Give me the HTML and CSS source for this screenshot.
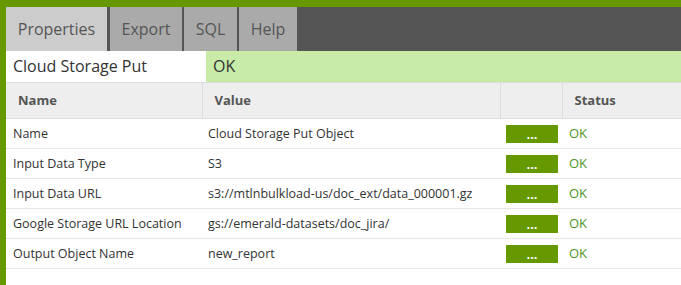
FILE: index.html
```html
<!DOCTYPE html>
<html lang="en">
<head>
    <meta charset="UTF-8">
    <title>Cloud Storage Put</title>
    <link rel="stylesheet" href="styles.css">
</head>
<body>
    <div class="panel">
        <div class="tabs">
            <div class="tab tab-properties active">Properties</div>
            <div class="tab tab-export">Export</div>
            <div class="tab tab-sql">SQL</div>
            <div class="tab tab-help">Help</div>
        </div>

        <div class="title-row">
            <div class="title-name">Cloud Storage Put</div>
            <div class="title-status">OK</div>
        </div>

        <table class="props">
            <thead>
                <tr>
                    <th class="col-name">Name</th>
                    <th class="col-value">Value</th>
                    <th class="col-btn"></th>
                    <th class="col-status">Status</th>
                </tr>
            </thead>
            <tbody>
                <tr>
                    <td>Name</td>
                    <td>Cloud Storage Put Object</td>
                    <td><button class="edit-button">...</button></td>
                    <td class="ok">OK</td>
                </tr>
                <tr>
                    <td>Input Data Type</td>
                    <td>S3</td>
                    <td><button class="edit-button">...</button></td>
                    <td class="ok">OK</td>
                </tr>
                <tr>
                    <td>Input Data URL</td>
                    <td>s3://mtlnbulkload-us/doc_ext/data_000001.gz</td>
                    <td><button class="edit-button">...</button></td>
                    <td class="ok">OK</td>
                </tr>
                <tr>
                    <td>Google Storage URL Location</td>
                    <td>gs://emerald-datasets/doc_jira/</td>
                    <td><button class="edit-button">...</button></td>
                    <td class="ok">OK</td>
                </tr>
                <tr>
                    <td>Output Object Name</td>
                    <td>new_report</td>
                    <td><button class="edit-button">...</button></td>
                    <td class="ok">OK</td>
                </tr>
            </tbody>
        </table>
    </div>
</body>
</html>
```

FILE: styles.css
```css
html, body {
    margin: 0;
    height: 100%;
}
body {
    font-family: "Open Sans", Arial, sans-serif;
    color: #333;
    background: #fff;
}
.panel {
    height: 100%;
    box-sizing: border-box;
    border-top: 7px solid #669900;
    border-left: 6px solid #669900;
}
.tabs {
    display: flex;
    gap: 2px;
    height: 44px;
    background: #555;
}
.tab {
    line-height: 44px;
    font-size: 16px;
    text-align: center;
    color: #555;
    background: #aaa;
}
.tab.active {
    background: #ccc;
    margin-right: 1px;
}
.tab-properties { width: 101px; }
.tab-export { width: 72px; }
.tab-sql { width: 53px; }
.tab-help { width: 58px; }
.title-row {
    display: flex;
    height: 31px;
    border-bottom: 1px solid #ddd;
    font-size: 16px;
    line-height: 31px;
}
.title-name {
    width: 200px;
    padding-left: 7px;
    box-sizing: border-box;
}
.title-status {
    flex: 1;
    padding-left: 7px;
    background: #c8eca8;
}
.props {
    width: 100%;
    border-collapse: collapse;
    font-size: 13px;
    table-layout: fixed;
}
.props th {
    box-sizing: border-box;
    height: 35px;
    padding: 0 12px;
    text-align: left;
    font-weight: bold;
    color: #555;
    background: #eee;
    border-bottom: 1px solid #ddd;
    border-left: 1px solid #ddd;
}
.props th:first-child {
    border-left: none;
}
.col-name { width: 196px; }
.col-value { width: 298px; }
.col-btn { width: 62px; }
.props td {
    height: 29px;
    padding: 0 6px;
    font-size: 12.5px;
    border-bottom: 1px solid #e6e6e6;
    white-space: nowrap;
}
.props td:first-child {
    padding-left: 7px;
}
.props td.ok {
    padding-left: 7px;
    font-size: 13px;
    color: #4d9426;
}
.edit-button {
    display: block;
    width: 52px;
    height: 18px;
    padding: 0;
    border: none;
    background: #669900;
    color: #fff;
    font-family: "Open Sans", Arial, sans-serif;
    font-size: 13px;
    font-weight: bold;
    line-height: 18px;
    margin-top: 1px;
}
```
